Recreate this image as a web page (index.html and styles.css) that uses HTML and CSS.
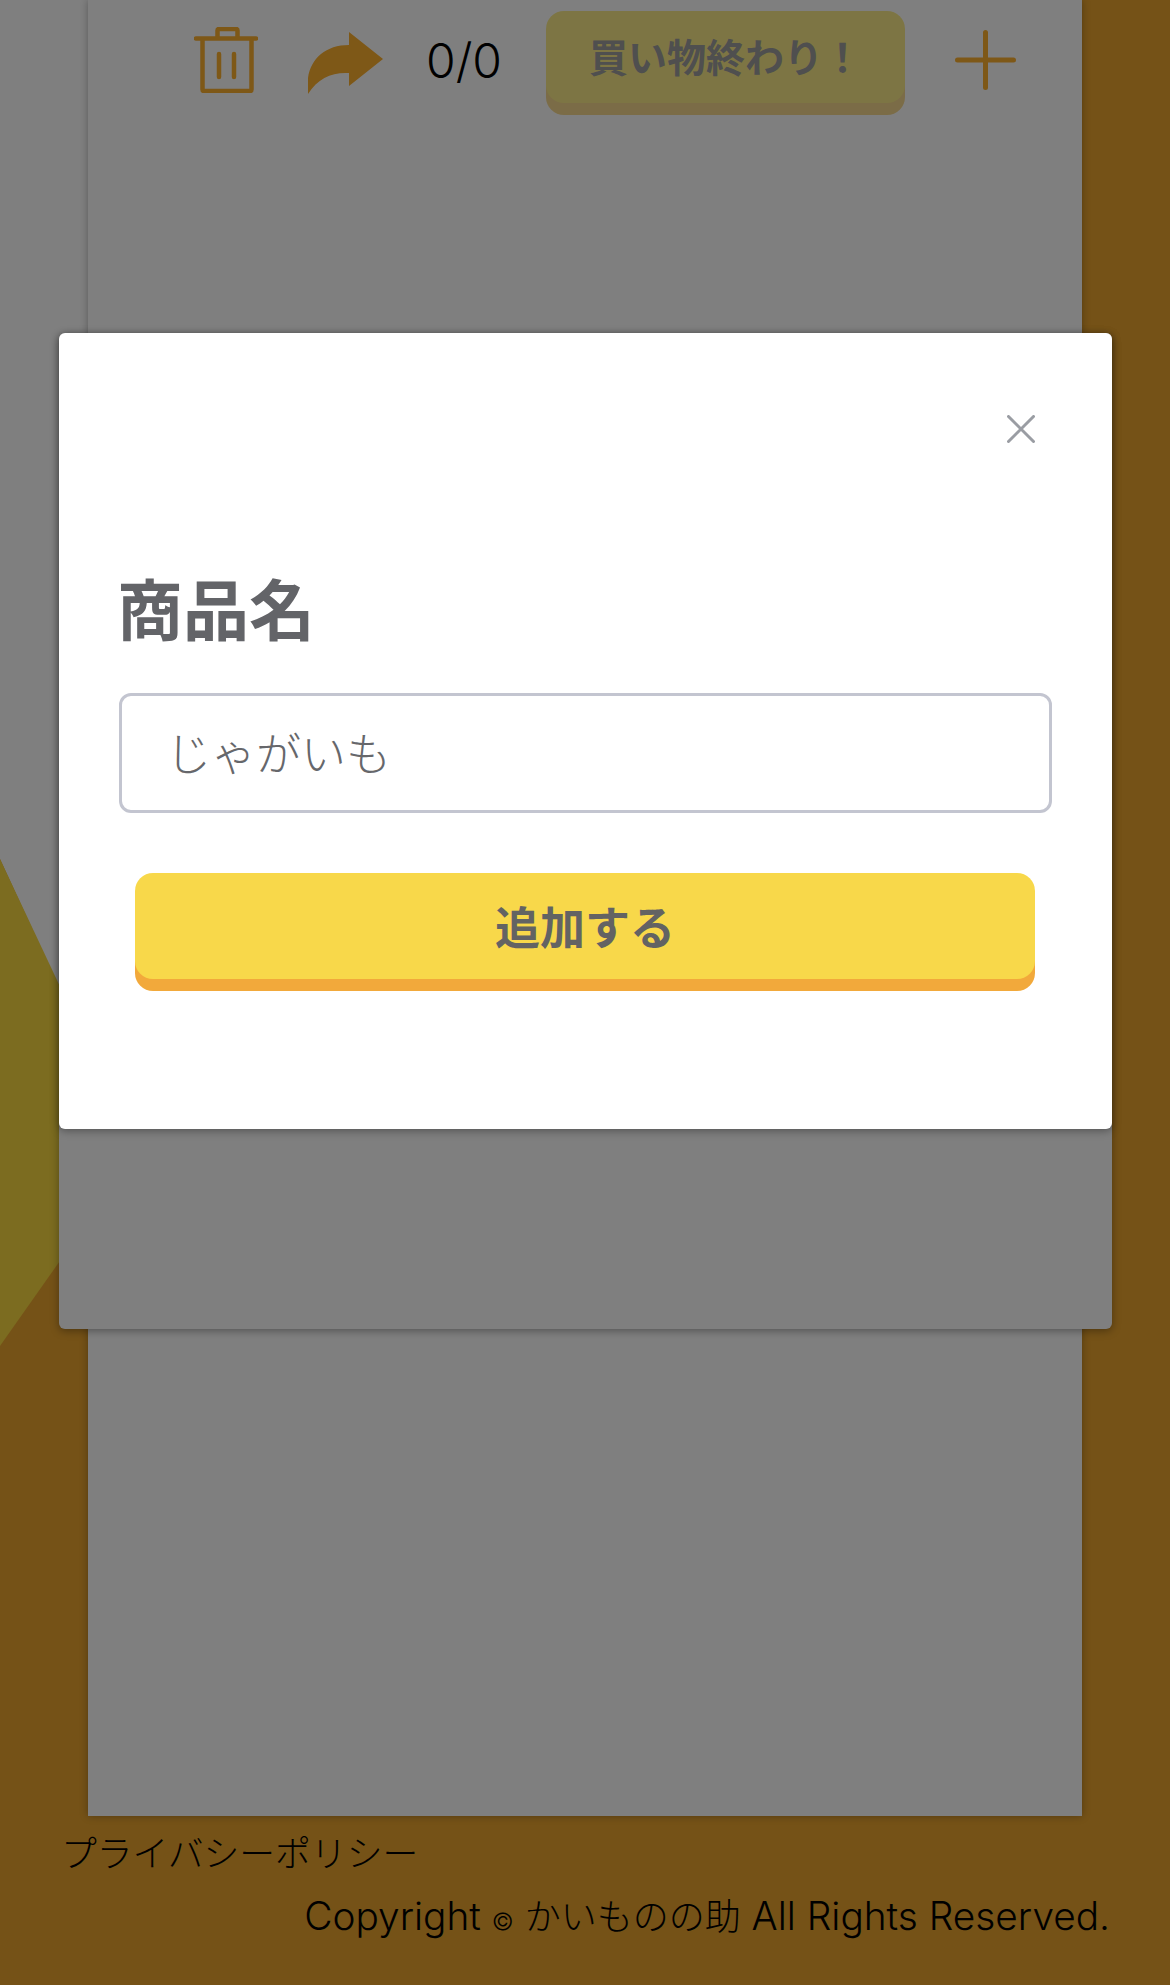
FILE: index.html
```html
<!DOCTYPE html>
<html lang="ja">
<head>
    <meta charset="UTF-8">
    <meta name="viewport" content="width=device-width, initial-scale=1.0">
    <title>かいものの助</title>
    <link rel="stylesheet" href="styles.css">
</head>
<body>
    <div class="bg-white"></div>
    <div class="bg-yellow"></div>

    <main class="paper">
        <div class="toolbar">
            <svg class="icon-trash" viewBox="0 0 64 66" aria-label="削除">
                <path d="M2 11.5H62M8.5 11.5V62.5Q8.5 64 10 64H56Q57.5 64 57.5 62.5V11.5M23.5 11.5V3.5Q23.5 2 25 2H42Q43.5 2 43.5 3.5V11.5M25 27V50M40 27V50" fill="none" stroke="#fdb02f" stroke-width="4.5" stroke-linecap="round" stroke-linejoin="round"/>
            </svg>
            <svg class="icon-share" viewBox="0 0 75 62" aria-label="共有">
                <path d="M41 0L75 27L41 54V41C24 40 10 46 0 62V46C3 26 18 13 41 13Z" fill="#fdb02f"/>
            </svg>
            <span class="count">0/0</span>
            <button class="finish-btn">買い物終わり！</button>
            <svg class="icon-plus" viewBox="0 0 61 60" aria-label="追加">
                <path d="M30.5 2.5V57.5M2.5 30H58.5" fill="none" stroke="#fdb02f" stroke-width="5" stroke-linecap="round"/>
            </svg>
        </div>
    </main>

    <footer class="footer">
        <a class="privacy">プライバシーポリシー</a>
        <p class="copyright">Copyright <span class="copy-mark">©</span> <span class="shop-name">かいものの助</span> All Rights Reserved.</p>
    </footer>

    <div class="under-panel"></div>
    <div class="overlay"></div>

    <div class="modal">
        <div class="modal-head">
            <svg class="icon-close" viewBox="0 0 28 28" aria-label="閉じる">
                <path d="M1.5 1.5L26.5 26.5M26.5 1.5L1.5 26.5" fill="none" stroke="#9a9da3" stroke-width="3" stroke-linecap="round"/>
            </svg>
        </div>
        <h2 class="modal-title">商品名</h2>
        <input class="item-input" type="text" value="じゃがいも">
        <button class="add-btn">追加する</button>
    </div>
</body>
</html>
```

FILE: styles.css
```css
* {
    box-sizing: border-box;
}
html, body {
    height: 1985px;
}
body {
    position: relative;
    margin: 0;
    overflow: hidden;
    background-color: #eaa42e;
    font-family: "Noto Sans CJK JP", "Liberation Sans", sans-serif;
    color: #000;
}
.bg-white {
    position: absolute;
    top: 0;
    left: 0;
    width: 88px;
    height: 1050px;
    background-color: #fff;
    clip-path: polygon(0 0, 100% 0, 100% 100%, 0 859px);
}
.bg-yellow {
    position: absolute;
    top: 859px;
    left: 0;
    width: 88px;
    height: 487px;
    background-color: #f8d840;
    clip-path: polygon(0 0, 100% 187px, 100% 362px, 0 100%);
}
.paper {
    position: relative;
    height: 1816px;
    margin: 0 88px;
    background-color: #fff;
    box-shadow: 0 0 8px rgba(0, 0, 0, 0.3);
}
.toolbar {
    display: flex;
    align-items: flex-start;
    padding: 11px 0 0 106px;
}
.icon-trash {
    width: 64px;
    height: 66px;
    margin-top: 16px;
}
.icon-share {
    width: 75px;
    height: 62px;
    margin: 21px 0 0 50px;
}
.count {
    width: 72px;
    margin: 20px 0 0 43px;
    font-family: Inter, "Noto Sans CJK JP", sans-serif;
    font-size: 48px;
    line-height: 60px;
    font-weight: 300;
    white-space: nowrap;
}
.finish-btn {
    width: 359px;
    height: 92px;
    margin-left: 48px;
    padding: 0 0 4px;
    border: none;
    border-radius: 18px;
    background-color: #fbeb88;
    box-shadow: 0 12px 0 #f6d88e;
    color: #9e9e9e;
    font-family: inherit;
    font-size: 39px;
    font-weight: 700;
}
.icon-plus {
    width: 61px;
    height: 60px;
    margin: 19px 0 0 50px;
}
.footer {
    position: relative;
    padding: 13px 60px 0 61px;
    font-family: Inter, "Noto Sans CJK JP", sans-serif;
    font-size: 35.8px;
    font-weight: 300;
}
.privacy {
    display: block;
    line-height: 50px;
}
.copyright {
    margin: 12px 0 0;
    text-align: right;
    font-size: 38.8px;
    line-height: 50px;
    white-space: nowrap;
}
.copy-mark {
    font-size: 24px;
}
.shop-name {
    font-size: 36px;
}
.under-panel {
    position: absolute;
    top: 333px;
    left: 59px;
    width: 1053px;
    height: 996px;
    border-radius: 6px;
    background-color: #fff;
    box-shadow: 0 2px 8px rgba(0, 0, 0, 0.35);
}
.overlay {
    position: absolute;
    top: 0;
    left: 0;
    width: 100%;
    height: 100%;
    background-color: rgba(0, 0, 0, 0.5);
}
.modal {
    position: absolute;
    top: 333px;
    left: 59px;
    width: 1053px;
    height: 796px;
    padding: 82px 60px 0;
    border-radius: 6px;
    background-color: #fff;
    box-shadow: 0 2px 8px rgba(0, 0, 0, 0.35);
}
.modal-head {
    display: flex;
    justify-content: flex-end;
    padding-right: 17px;
}
.icon-close {
    width: 28px;
    height: 28px;
}
.modal-title {
    margin: 118px 0 0 -2px;
    color: #636468;
    font-size: 66px;
    line-height: 90px;
    font-weight: 700;
}
.item-input {
    display: block;
    width: 933px;
    height: 120px;
    margin-top: 42px;
    padding: 0 44px 4px;
    border: 3px solid #c3c5d0;
    border-radius: 12px;
    color: #66676b;
    font-family: inherit;
    font-size: 45px;
    font-weight: 300;
}
.add-btn {
    display: block;
    width: 900px;
    height: 106px;
    margin: 60px 0 0 16px;
    padding: 0 0 2px;
    border: none;
    border-radius: 18px;
    background-color: #f8d84a;
    box-shadow: 0 12px 0 #f2a93b;
    color: #636363;
    font-family: inherit;
    font-size: 45px;
    font-weight: 700;
}
```
